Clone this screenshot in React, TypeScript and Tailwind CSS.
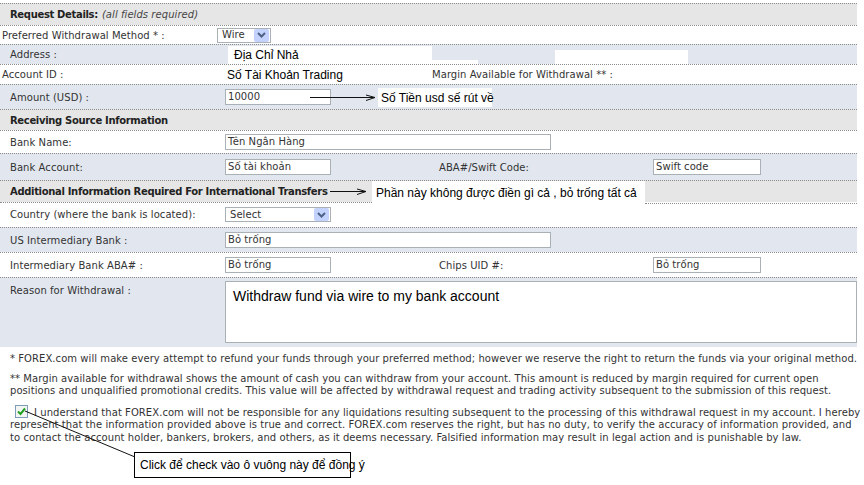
import React from 'react';

const V = "font-['DejaVu_Sans',Verdana,sans-serif]";
const A = "font-['Liberation_Sans',Arial,sans-serif]";

interface RowProps {
  h: string;
  bg?: string;
  className?: string;
  children?: React.ReactNode;
}

const Row: React.FC<RowProps> = ({ h, bg = 'bg-white', className = '', children }) => (
  <div className={`relative flex items-center border-t border-dotted border-[#8c8c8c] ${h} ${bg} ${className}`}>
    {children}
  </div>
);

const Field: React.FC<{ w: string; value: string }> = ({ w, value }) => (
  <div className={`${w} h-[16px] border border-[#a9b0b6] bg-white pl-[2px] flex items-center text-[10px] leading-none text-[#333]`}>
    {value}
  </div>
);

const Select: React.FC<{ w: string; value: string }> = ({ w, value }) => (
  <div className={`${w} h-[15px] border border-[#a9b0b6] bg-white flex items-center justify-between text-[10px] leading-none text-[#333]`}>
    <span className="pl-[4px]">{value}</span>
    <span className="w-[15px] h-[13px] mr-[1px] bg-[#c3d3fd] rounded-[2px] flex items-center justify-center">
      <svg width="9" height="6" viewBox="0 0 9 6">
        <path d="M1 1 L4.5 4.5 L8 1" fill="none" stroke="#4d6185" strokeWidth="2" />
      </svg>
    </span>
  </div>
);

const Arrow: React.FC<{ w: number }> = ({ w }) => (
  <svg width={w} height="9" viewBox={`0 0 ${w} 9`}>
    <path d={`M0 4.5 H${w - 1}`} stroke="#111" strokeWidth="1" />
    <path d={`M${w - 10} 2 L${w - 1} 4.5 L${w - 10} 7.5`} fill="none" stroke="#111" strokeWidth="1" />
  </svg>
);

const Head: React.FC<{ children: React.ReactNode }> = ({ children }) => (
  <b className="text-[#222] tracking-[-0.33px]">{children}</b>
);

export default function App() {
  return (
    <div className={`relative w-[864px] h-[485px] bg-white text-[#333] text-[10px] tracking-[0.06px] ${V} overflow-hidden`}>
      <div className="w-[857px] pt-[3px]">
        <Row h="h-[22px]" bg="bg-[#e6e6e6]" className="pl-[10px]">
          <Head>Request Details:</Head>
          <i className="ml-[4px] text-[#444]">(all fields required)</i>
        </Row>

        <Row h="h-[19px]">
          <span className="w-[217px] pl-[2px]">Preferred Withdrawal Method * :</span>
          <Select w="w-[54px]" value="Wire" />
        </Row>

        <Row h="h-[20px]" bg="bg-[#e2e7ef]">
          <span className="w-[225px] pl-[10px]">Address :</span>
          <div className="absolute left-[228px] top-[1px] w-[204px] h-[18px] bg-white" />
          <div className="absolute left-[432px] top-[15px] w-[46px] h-[4px] bg-white" />
          <div className="absolute left-[555px] top-[5px] w-[133px] h-[14px] bg-white" />
          <span className={`relative ml-[9px] text-[12px] tracking-normal text-black ${A}`}>Địa Chỉ Nhả</span>
        </Row>

        <Row h="h-[20px]">
          <span className="w-[227px] pl-[2px]">Account ID :</span>
          <span className={`w-[205px] text-[12px] tracking-normal text-black ${A}`}>Số Tài Khoản Trading</span>
          <span>Margin Available for Withdrawal ** :</span>
        </Row>

        <Row h="h-[25px]" bg="bg-[#e2e7ef]">
          <span className="w-[225px] pl-[10px]">Amount (USD) :</span>
          <Field w="w-[106px]" value="10000" />
          <div className="absolute left-[310px] top-[8px]">
            <Arrow w={66} />
          </div>
          <div className={`absolute left-[378px] top-[3px] w-[114px] h-[19px] bg-white pl-[3px] flex items-center whitespace-nowrap text-[12px] tracking-normal text-black ${A}`}>
            Số Tiền usd sế rút về
          </div>
        </Row>

        <Row h="h-[21px]" bg="bg-[#e6e6e6]" className="pl-[10px]">
          <Head>Receiving Source Information</Head>
        </Row>

        <Row h="h-[23px]">
          <span className="w-[225px] pl-[10px]">Bank Name:</span>
          <Field w="w-[326px]" value="Tên Ngân Hàng" />
        </Row>

        <Row h="h-[27px]" bg="bg-[#e2e7ef]">
          <span className="w-[225px] pl-[10px]">Bank Account:</span>
          <div className="w-[214px]">
            <Field w="w-[106px]" value="Số tài khoản" />
          </div>
          <span className="w-[214px]">ABA#/Swift Code:</span>
          <Field w="w-[108px]" value="Swift code" />
        </Row>

        <Row h="h-[22px]" bg="bg-[#e6e6e6]" className="pl-[10px]">
          <Head>Additional Information Required For International Transfers</Head>
          <div className="absolute left-[372px] top-0 w-[273px] h-[22px] bg-white" />
          <div className="absolute left-[330px] top-[6px]">
            <Arrow w={37} />
          </div>
          <span className={`absolute left-[376px] top-[3px] whitespace-nowrap text-[12px] tracking-normal text-black ${A}`}>
            Phần này không được điền gì cả , bỏ trống tất cả
          </span>
        </Row>

        <Row h="h-[25px]" className="border-t-0">
          <div className="absolute left-0 top-0 w-[372px] border-t border-dotted border-[#8c8c8c]" />
          <div className="absolute left-[645px] top-[1px] w-[212px] border-t border-dotted border-[#8c8c8c]" />
          <span className="w-[225px] pl-[10px]">Country (where the bank is located):</span>
          <Select w="w-[106px]" value="Select" />
        </Row>

        <Row h="h-[25px]" bg="bg-[#e2e7ef]">
          <span className="w-[225px] pl-[10px]">US Intermediary Bank :</span>
          <Field w="w-[326px]" value="Bỏ trống" />
        </Row>

        <Row h="h-[25px]">
          <span className="w-[225px] pl-[10px]">Intermediary Bank ABA# :</span>
          <div className="w-[214px]">
            <Field w="w-[106px]" value="Bỏ trống" />
          </div>
          <span className="w-[214px]">Chips UID #:</span>
          <Field w="w-[108px]" value="Bỏ trống" />
        </Row>

        <Row h="h-[70px]" bg="bg-[#e2e7ef]" className="!items-start">
          <span className="w-[225px] pl-[10px] pt-[5px]">Reason for Withdrawal :</span>
          <div className={`mt-[3px] flex-1 h-[62px] border border-[#a9b0b6] bg-white pl-[7px] pt-[4px] text-[14px] tracking-normal text-black ${A}`}>
            Withdraw fund via wire to my bank account
          </div>
        </Row>
      </div>

      <div className="px-[10px] pt-[6px] leading-[12.5px] whitespace-nowrap">
        <p>* FOREX.com will make every attempt to refund your funds through your preferred method; however we reserve the right to return the funds via your original method.</p>
        <p className="mt-[7px]">
          ** Margin available for withdrawal shows the amount of cash you can withdraw from your account. This amount is reduced by margin required for current open
          <br />
          positions and unqualified promotional credits. This value will be affected by withdrawal request and trading activity subsequent to the submission of this request.
        </p>
        <p className="mt-[7px]">
          <span className="inline-block align-[-2px] ml-[5px] mr-[6px] w-[13px] h-[13px] border border-[#7f9db9] bg-[#f2f5f2]">
            <svg width="11" height="11" viewBox="0 0 11 11">
              <path d="M2 5.5 L4.5 8 L9 2.5" fill="none" stroke="#21a121" strokeWidth="2" />
            </svg>
          </span>
          I understand that FOREX.com will not be responsible for any liquidations resulting subsequent to the processing of this withdrawal request in my account. I hereby
          <br />
          represent that the information provided above is true and correct. FOREX.com reserves the right, but has no duty, to verify the accuracy of information provided, and
          <br />
          to contact the account holder, bankers, brokers, and others, as it deems necessary. Falsified information may result in legal action and is punishable by law.
        </p>
        <div className={`mt-[8px] ml-[124px] w-[217px] h-[26px] border border-black pl-[5px] flex items-center text-[12px] tracking-normal text-black ${A}`}>
          Click để check vào ô vuông này để đồng ý
        </div>
      </div>

      <svg className="absolute left-0 top-0 pointer-events-none" width="864" height="485">
        <path d="M25 411 L135 457" stroke="#111" strokeWidth="1" />
      </svg>
    </div>
  );
}
